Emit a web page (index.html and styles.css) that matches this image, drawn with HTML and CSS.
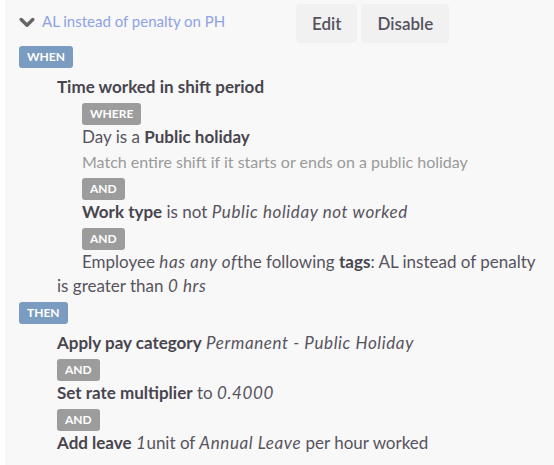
FILE: index.html
```html
<!DOCTYPE html>
<html>
<head>
<meta charset="utf-8">
<link rel="stylesheet" href="styles.css">
</head>
<body>
<div class="panel">
  <div class="header">
    <div class="title-wrap">
      <svg class="chev" width="16" height="11" viewBox="0 0 16 11"><path d="M2.2 2.5 L8 8.3 L13.8 2.5" fill="none" stroke="#656565" stroke-width="3.4" stroke-linecap="round" stroke-linejoin="round"/></svg>
      <span class="title">AL instead of penalty on PH</span>
    </div>
    <div class="actions">
      <button class="btn">Edit</button>
      <button class="btn">Disable</button>
    </div>
  </div>

  <span class="badge blue">WHEN</span>
  <div class="lvl1">
    <div class="line"><b>Time worked in shift period</b></div>
    <div class="lvl2">
      <span class="badge grey">WHERE</span>
      <div class="line tight">Day is a <b>Public holiday</b></div>
      <div class="line muted">Match entire shift if it starts or ends on a public holiday</div>
      <span class="badge grey">AND</span>
      <div class="line"><b>Work type</b> is not <i>Public holiday not worked</i></div>
      <span class="badge grey">AND</span>
      <div class="line tight nowrap">Employee <i>has any of</i>the following <b>tags</b>: AL instead of penalty</div>
    </div>
    <div class="line">is greater than <i>0 hrs</i></div>
  </div>

  <span class="badge blue">THEN</span>
  <div class="lvl1">
    <div class="line"><b>Apply pay category</b> <i>Permanent - Public Holiday</i></div>
    <span class="badge grey">AND</span>
    <div class="line"><b>Set rate multiplier</b> to <i>0.4000</i></div>
    <span class="badge grey">AND</span>
    <div class="line"><b>Add leave</b> <i>1</i>unit of <i>Annual Leave</i> per hour worked</div>
  </div>
</div>
</body>
</html>
```

FILE: styles.css
```css
html, body {
  margin: 0;
  padding: 0;
  background: #ffffff;
}
body {
  font-family: "Lato", "Liberation Sans", sans-serif;
  color: #57535e;
  overflow: hidden;
}
.panel {
  margin-left: 5px;
  background: #f8f8f8;
  min-height: 465px;
  padding: 4px 0 0 14px;
  box-sizing: border-box;
}
.header {
  display: flex;
  align-items: flex-start;
  height: 42px;
}
.title-wrap {
  display: flex;
  align-items: center;
  height: 34px;
  width: 277px;
}
.chev {
  margin-left: 0;
  margin-right: 7px;
  margin-top: 3px;
}
.title {
  color: #8fa2e4;
  font-size: 15px;
}
.actions {
  display: flex;
  gap: 4px;
}
.btn {
  font-family: inherit;
  font-size: 17px;
  color: #55525c;
  background: #f1f1f1;
  border: none;
  border-radius: 4px;
  height: 39px;
  padding: 0 16px;
  font-weight: 600;
}
.badge {
  display: inline-block;
  height: 22px;
  line-height: 22px;
  padding: 0 8px;
  border-radius: 3px;
  color: #fff;
  font-size: 12px;
  font-weight: 700;
  vertical-align: top;
}
.blue { background: #7b9cc1; }
.grey { background: #9c9c9c; }
.lvl1 {
  padding-left: 38px;
  margin-top: 7px;
}
.lvl2 {
  padding-left: 25px;
}
.line {
  font-size: 17px;
  line-height: 24px;
  margin-bottom: 4px;
}
.line.tight { margin-bottom: 0; }
.nowrap { white-space: nowrap; }
.line.muted {
  font-size: 16px;
  color: #9a9a9a;
  line-height: 25px;
}
b {
  font-weight: 700;
  color: #48454f;
}
i {
  font-style: italic;
  letter-spacing: 0.6px;
}
```
